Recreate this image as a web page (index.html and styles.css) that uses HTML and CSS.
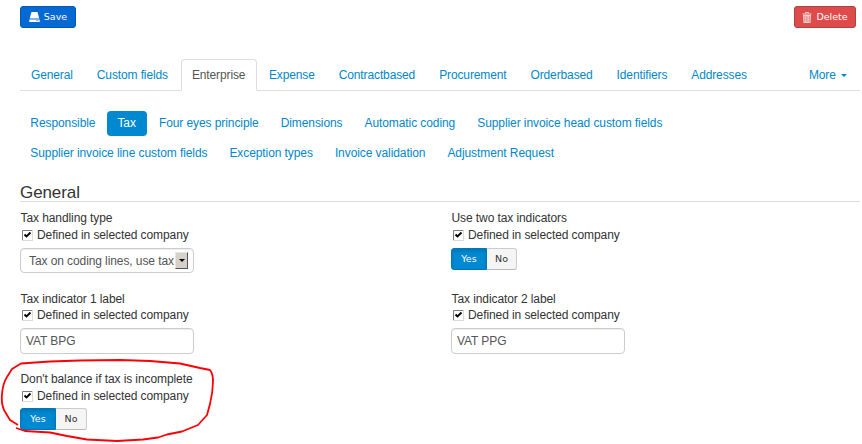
FILE: index.html
```html
<!DOCTYPE html>
<html lang="en">
<head>
<meta charset="utf-8">
<title>Company settings</title>
<link rel="stylesheet" href="styles.css">
</head>
<body>
<header class="toolbar">
  <button class="btn save"><svg width="11" height="10" viewBox="0 0 11 10"><path d="M2.5 0h6l1.8 6.5H.7zM.3 7.5h10.4V10H.3z" fill="#fff"/><path d="M7 8.6h2.5" stroke="#79b3e8"/></svg><span>Save</span></button>
  <button class="btn delete"><svg width="10" height="11" viewBox="0 0 10 11"><path d="M3.5 1.5V.5h3v1M.5 2h9" fill="none" stroke="#fbd5d3"/><path d="M1 3h8l-.5 8h-7z" fill="#f8d0ce"/><path d="M2.7 4v6M4.3 4v6M5.9 4v6M7.5 4v6" stroke="#cf5b58" stroke-width=".5"/></svg><span>Delete</span></button>
</header>
<nav class="tabs">
  <a>General</a><a>Custom fields</a><a class="active">Enterprise</a><a>Expense</a><a>Contractbased</a><a>Procurement</a><a>Orderbased</a><a>Identifiers</a><a>Addresses</a><a class="more">More <i class="caret"></i></a>
</nav>
<nav class="pills">
  <a>Responsible</a><a class="active">Tax</a><a>Four eyes principle</a><a>Dimensions</a><a>Automatic coding</a><a>Supplier invoice head custom fields</a>
</nav>
<nav class="pills second">
  <a>Supplier invoice line custom fields</a><a>Exception types</a><a>Invoice validation</a><a>Adjustment Request</a>
</nav>
<h2>General</h2>
<main class="fields">
  <section class="field">
    <div class="label">Tax handling type</div>
    <div class="check"><svg class="box" width="11" height="11" viewBox="0 0 11 11"><path d="M0 0h11v11H0z" fill="#dedbd6"/><path d="M.5 10V.5H10" fill="none" stroke="#807c78"/><path d="M1 1h9v9H1z" fill="#fff"/><path d="M2.500 4.500l2 2 4-4" fill="none" stroke="#000" stroke-width="1.900"/></svg><span>Defined in selected company</span></div>
    <div class="select"><span>Tax on coding lines, use tax</span><b class="arrow"><svg width="6" height="3" viewBox="0 0 6 3"><path d="M0 0h6L3 3z"/></svg></b></div>
  </section>
  <section class="field">
    <div class="label">Use two tax indicators</div>
    <div class="check"><svg class="box" width="11" height="11" viewBox="0 0 11 11"><path d="M0 0h11v11H0z" fill="#dedbd6"/><path d="M.5 10V.5H10" fill="none" stroke="#807c78"/><path d="M1 1h9v9H1z" fill="#fff"/><path d="M2.500 4.500l2 2 4-4" fill="none" stroke="#000" stroke-width="1.900"/></svg><span>Defined in selected company</span></div>
    <div class="toggle"><span class="yes">Yes</span><span class="no">No</span></div>
  </section>
  <section class="field lower">
    <div class="label">Tax indicator 1 label</div>
    <div class="check"><svg class="box" width="11" height="11" viewBox="0 0 11 11"><path d="M0 0h11v11H0z" fill="#dedbd6"/><path d="M.5 10V.5H10" fill="none" stroke="#807c78"/><path d="M1 1h9v9H1z" fill="#fff"/><path d="M2.500 4.500l2 2 4-4" fill="none" stroke="#000" stroke-width="1.900"/></svg><span>Defined in selected company</span></div>
    <div class="input">VAT BPG</div>
  </section>
  <section class="field lower">
    <div class="label">Tax indicator 2 label</div>
    <div class="check"><svg class="box" width="11" height="11" viewBox="0 0 11 11"><path d="M0 0h11v11H0z" fill="#dedbd6"/><path d="M.5 10V.5H10" fill="none" stroke="#807c78"/><path d="M1 1h9v9H1z" fill="#fff"/><path d="M2.500 4.500l2 2 4-4" fill="none" stroke="#000" stroke-width="1.900"/></svg><span>Defined in selected company</span></div>
    <div class="input">VAT PPG</div>
  </section>
  <section class="field last">
    <div class="label">Don't balance if tax is incomplete</div>
    <div class="check"><svg class="box" width="11" height="11" viewBox="0 0 11 11"><path d="M0 0h11v11H0z" fill="#dedbd6"/><path d="M.5 10V.5H10" fill="none" stroke="#807c78"/><path d="M1 1h9v9H1z" fill="#fff"/><path d="M2.500 4.500l2 2 4-4" fill="none" stroke="#000" stroke-width="1.900"/></svg><span>Defined in selected company</span></div>
    <div class="toggle"><span class="yes">Yes</span><span class="no">No</span></div>
  </section>
</main>
<svg class="marker" width="220" height="90" viewBox="0 354 220 90"><path d="M18 425L10 420L4 410Q1 403 2 394Q3 383 7 377L12 369L21 363.500L50 361.500L80 360.500L120 360L150 361L180 363.500L200 368L210 370Q213 374 213 381Q213 392 210 404L207 415L198 425L182 431.500L167 434.500L158 437.500L143 439.500L117 441L87 439.500L67 436L50 432.500L25 431L16 428" fill="none" stroke="#fb0007" stroke-width="1.800" stroke-linejoin="round"/></svg>
</body>
</html>
```
FILE: styles.css
```css
* { box-sizing: border-box; }
body { margin: 0; width: 862px; height: 444px; padding: 6px 2px 0 20px; overflow: hidden; position: relative; background: #fff; color: #333; font: 12px/18px "Liberation Sans", Arial, sans-serif; letter-spacing: -.09px; }
.toolbar { display: flex; justify-content: space-between; padding-right: 4px; height: 53px; }
.btn { display: flex; align-items: center; justify-content: center; gap: 4px; height: 22px; padding: 0; border-radius: 3px; color: #fff; font: 9.5px/20px "DejaVu Sans", sans-serif; letter-spacing: 0; }
.save { width: 56px; background: #0469d2; border: 1px solid #0559b2; }
.delete { width: 62px; background: #df4a4a; border: 1px solid #a9443f; }
.tabs { display: flex; height: 32px; border-bottom: 1px solid #ddd; letter-spacing: -.125px; }
.tabs a { height: 32px; padding: 6px 10px 0; border: 1px solid transparent; margin-right: 2px; color: #0088cc; white-space: nowrap; }
.tabs .active { width: 76px; margin-right: 1px; color: #555; background: #fff; border-color: #ddd #ddd #fff; border-radius: 4px 4px 0 0; }
.tabs .more { margin-left: auto; }
.caret { display: inline-block; margin-left: 2px; vertical-align: 2px; border: 3px solid transparent; border-top-color: #0088cc; border-bottom: 0; }
.pills { display: flex; gap: 2px; margin-top: 20px; height: 25px; padding-left: .3px; letter-spacing: -.085px; }
.pills.second { margin-top: 5px; }
.pills a { height: 25px; padding: 3px 10px 0; color: #0088cc; border-radius: 4px; white-space: nowrap; }
.pills .active { width: 40px; margin-right: -.5px; background: #0088d0; color: #fff; }
h2 { margin: 16px 0 0; height: 20px; padding-top: 1px; border-bottom: 1px solid #ddd; font-weight: 400; font-size: 17px; line-height: 20px; }
.fields { display: grid; grid-template-columns: 431px 1fr; grid-template-rows: 80px 80px 80px; padding-top: 7px; }
.label { height: 18px; padding-left: .5px; white-space: nowrap; }
.lower .label { height: 17px; margin-top: 1px; }
.check { display: flex; height: 16px; padding-left: 2px; gap: 4px; align-items: center; white-space: nowrap; }
.box { width: 11px; height: 11px; }
.select, .input { width: 174px; height: 26px; margin-top: 5px; border: 1px solid #ccc; border-radius: 4px; color: #555; box-shadow: inset 0 1px 1px #eee; }
.select { display: flex; height: 25px; padding: 3px 5px 0 8px; line-height: 18px; }
.select span { width: 146px; white-space: nowrap; overflow: hidden; }
.arrow { display: grid; place-items: center; width: 13px; height: 17px; background: #d5d1c9; border: 1px solid #e8e6e2; border-right-color: #555; border-bottom-color: #555; }
.input { padding: 3px 5px; line-height: 18px; }
.toggle { display: flex; margin-top: 5px; width: 66px; height: 22px; font: 9.5px/20px "DejaVu Sans", sans-serif; letter-spacing: 0; text-align: center; }
.last { padding-top: 1px; }
.last .toggle { width: 67px; margin-top: 4px; }
.yes { width: 36px; background: #0088d0; border: 1px solid #0078b8; border-radius: 3px 0 0 3px; color: #fff; box-shadow: inset 0 2px 3px #0076b5; }
.no { flex: 1; background: #f5f5f5; border: 1px solid #ccc; border-left: 0; border-bottom-color: #b8b8b8; border-radius: 0 3px 3px 0; }
.marker { position: absolute; left: 0; top: 354px; }
```
